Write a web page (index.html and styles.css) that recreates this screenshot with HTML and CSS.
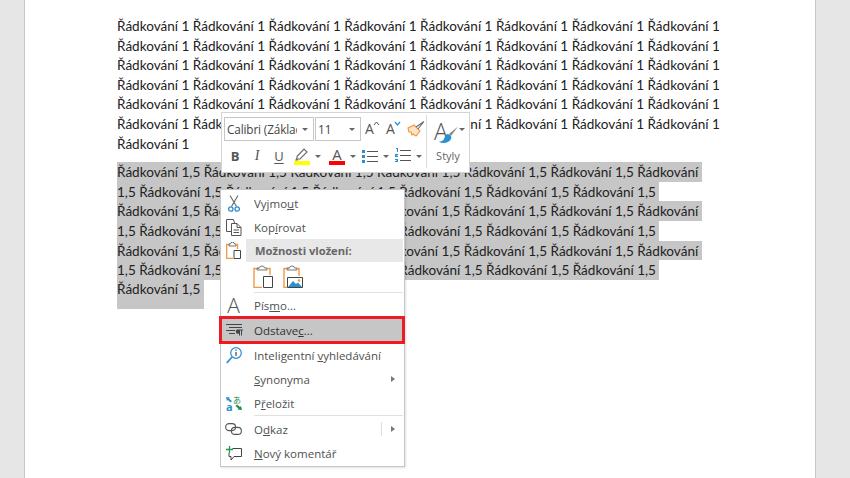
FILE: index.html
```html
<!DOCTYPE html>
<html lang="cs">
<head>
<meta charset="utf-8">
<title>Řádkování</title>
<link rel="stylesheet" href="styles.css">
</head>
<body>
<main class="page">
  <div class="para">
    <div class="line">Řádkování 1 Řádkování 1 Řádkování 1 Řádkování 1 Řádkování 1 Řádkování 1 Řádkování 1 Řádkování 1</div>
    <div class="line">Řádkování 1 Řádkování 1 Řádkování 1 Řádkování 1 Řádkování 1 Řádkování 1 Řádkování 1 Řádkování 1</div>
    <div class="line">Řádkování 1 Řádkování 1 Řádkování 1 Řádkování 1 Řádkování 1 Řádkování 1 Řádkování 1 Řádkování 1</div>
    <div class="line">Řádkování 1 Řádkování 1 Řádkování 1 Řádkování 1 Řádkování 1 Řádkování 1 Řádkování 1 Řádkování 1</div>
    <div class="line">Řádkování 1 Řádkování 1 Řádkování 1 Řádkování 1 Řádkování 1 Řádkování 1 Řádkování 1 Řádkování 1</div>
    <div class="line">Řádkování 1 Řádkování 1 Řádkování 1 Řádkování 1 Řádkování 1 Řádkování 1 Řádkování 1 Řádkování 1</div>
    <div class="line">Řádkování 1</div>
  </div>
  <div class="para selected">
    <div class="line">Řádkování 1,5 Řádkování 1,5 Řádkování 1,5 Řádkování 1,5 Řádkování 1,5 Řádkování 1,5 Řádkování </div>
    <div class="line">1,5 Řádkování 1,5 Řádkování 1,5 Řádkování 1,5 Řádkování 1,5 Řádkování 1,5 Řádkování 1,5 </div>
    <div class="line">Řádkování 1,5 Řádkování 1,5 Řádkování 1,5 Řádkování 1,5 Řádkování 1,5 Řádkování 1,5 Řádkování </div>
    <div class="line">1,5 Řádkování 1,5 Řádkování 1,5 Řádkování 1,5 Řádkování 1,5 Řádkování 1,5 Řádkování 1,5 </div>
    <div class="line">Řádkování 1,5 Řádkování 1,5 Řádkování 1,5 Řádkování 1,5 Řádkování 1,5 Řádkování 1,5 Řádkování </div>
    <div class="line">1,5 Řádkování 1,5 Řádkování 1,5 Řádkování 1,5 Řádkování 1,5 Řádkování 1,5 Řádkování 1,5 </div>
    <div class="line last">Řádkování 1,5 </div>
  </div>
</main>

<div class="toolbar">
  <div class="tb-main">
    <div class="tb-row">
      <div class="combo font"><span class="combo-text">Calibri (Základní)</span><i class="caret"></i></div>
      <div class="combo size"><span class="combo-text">11</span><i class="caret"></i></div>
      <span class="grow first">A<svg class="sup" width="7" height="5" viewBox="0 0 7 5"><path d="M1 4l2.500-3L6 4" fill="none" stroke="#555" stroke-width="1"/></svg></span>
      <span class="grow">A<svg class="sup" width="7" height="5" viewBox="0 0 7 5"><path d="M1 1l2.500 3L6 1" fill="none" stroke="#2b8fd0" stroke-width="1.200"/></svg></span>
      <svg class="brush" width="18" height="16" viewBox="0 0 18 16"><path d="M1 7l6-3 6 6-4 5-3-2-1 1-1-3-2 0z" fill="#fce3c6" stroke="#ee9a45" stroke-width="1.200"/><path d="M9 6l8-5.500M11 8l6-7.500" fill="none" stroke="#6e6e6e" stroke-width="1.200"/></svg>
    </div>
    <div class="tb-row second">
      <span class="fmt bold">B</span>
      <span class="fmt ital">I</span>
      <span class="fmt under">U</span>
      <span class="color-btn">
        <svg width="16" height="13" viewBox="0 0 16 13"><path d="M3 8.500l7-7.500 3 3-7 7H3z" fill="none" stroke="#6a6a6a" stroke-width="1.100"/><path d="M1 12.500h3.500L2.500 10z" fill="#6a6a6a"/></svg>
        <i class="swatch yellow"></i>
      </span>
      <i class="caret gap"></i>
      <span class="color-btn">
        <span class="color-a">A</span>
        <i class="swatch red"></i>
      </span>
      <i class="caret gap"></i>
      <svg class="list" width="16" height="15" viewBox="0 0 16 15"><path d="M0 1h3v3H0zM0 6h3v3H0zM0 11h3v3H0z" fill="#2b8fd0"/><path d="M5 2.500h11M5 7.500h11M5 12.500h11" stroke="#555" stroke-width="1"/></svg>
      <i class="caret gap"></i>
      <svg class="list" width="16" height="16" viewBox="0 0 16 16"><path d="M1 0h2v4H2V1H1zM0 6h3v1l-2 1h2v1H0zM0 11h3v3H0v-1h2v-.500H1v-.500h1V12H0z" fill="#2b8fd0"/><path d="M5 2.500h11M5 7.500h11M5 12.500h11" stroke="#555" stroke-width="1"/></svg>
      <i class="caret gap"></i>
    </div>
  </div>
  <div class="tb-style">
    <div class="style-icon">
      <span class="style-a">A</span>
      <svg class="style-brush" width="20" height="18" viewBox="0 0 20 18"><path d="M19 .5L10 8l2 2z" fill="#8a8a8a"/><path d="M9 8c-3 0-3 3-4 5-1 2-3 2-5 3 4 2 10 1 12-3 1-2 0-4-3-5z" fill="#2b8fd0"/></svg>
      <i class="caret"></i>
    </div>
    <span class="style-label">Styly</span>
  </div>
</div>

<nav class="menu">
  <div class="item">
    <span class="ico"><svg width="12" height="17" viewBox="0 0 12 17"><path d="M2 .5l6.500 11M10 .5L3.500 11.500" fill="none" stroke="#666" stroke-width="1.100"/><circle cx="2.800" cy="14" r="2.200" fill="none" stroke="#2b8fd0" stroke-width="1.300"/><circle cx="9.200" cy="14" r="2.200" fill="none" stroke="#2b8fd0" stroke-width="1.300"/></svg></span>
    <span class="label">Vyjmo<u>u</u>t</span>
  </div>
  <div class="item">
    <span class="ico"><svg width="16" height="17" viewBox="0 0 16 17"><path d="M5 12.500H.5V.5h7l1 3.500M5.500 4.500h5.500l4 4v8H5.500zM11 4.500v4h4M7.500 11h5.500M7.500 13.500h5.500" fill="none" stroke="#555" stroke-width="1"/></svg></span>
    <span class="label">Kop<u>í</u>rovat</span>
  </div>
  <div class="item heading-row">
    <span class="ico"><svg width="15" height="17" viewBox="0 0 15 17"><path d="M4 2.500H.7v14H7" fill="none" stroke="#ee9a45" stroke-width="1.300"/><path d="M3 4V2h1.500a2 1.800 0 0 1 4 0H10v2z" fill="none" stroke="#777" stroke-width="1"/><path d="M10 2.500h1.500V7" fill="none" stroke="#ee9a45" stroke-width="1.300"/><path d="M8 8.500h6.500v8H8z" fill="#fff" stroke="#444" stroke-width="1"/></svg></span>
    <span class="heading">Možnosti vložení:</span>
  </div>
  <div class="paste-row">
    <svg width="20" height="23" viewBox="0 0 20 23"><path d="M6 3.500H1v19h8" fill="none" stroke="#ee9a45" stroke-width="1.400"/><path d="M4 5V3h2.500a2.500 2 0 0 1 5 0H14v2z" fill="none" stroke="#777" stroke-width="1"/><path d="M14 3.500h3V10" fill="none" stroke="#ee9a45" stroke-width="1.400"/><path d="M10.500 11.500h9v11h-9z" fill="#fff" stroke="#444" stroke-width="1"/></svg>
    <svg width="20" height="23" viewBox="0 0 20 23"><path d="M6 3.500H1v19h3" fill="none" stroke="#ee9a45" stroke-width="1.400"/><path d="M4 5V3h2.500a2.500 2 0 0 1 5 0H14v2z" fill="none" stroke="#777" stroke-width="1"/><path d="M14 3.500h2V11" fill="none" stroke="#ee9a45" stroke-width="1.400"/><path d="M4.500 12.500h15v10h-15z" fill="#fff" stroke="#444" stroke-width="1"/><path d="M5 22l5-6 3 3 2-1.500 4 4.500z" fill="#2b8fd0"/><circle cx="16" cy="15.500" r="1.300" fill="#ee9a45"/></svg>
  </div>
  <div class="sep indented"></div>
  <div class="item">
    <span class="ico"><span class="big-a">A</span></span>
    <span class="label">Pís<u>m</u>o...</span>
  </div>
  <div class="item active">
    <span class="ico"><svg width="17" height="12" viewBox="0 0 17 12"><path d="M0 .5h16M3 3.500h13M0 6.500h9M3 9.500h6" stroke="#444" stroke-width="1"/><path d="M11 5.500h6v1h-1v5h-1v-5h-1v5h-1V9.500a2 2 0 0 1-2-4z" fill="#444"/></svg></span>
    <span class="label">Odstave<u>c</u>...</span>
  </div>
  <div class="item">
    <span class="ico"><svg width="16" height="17" viewBox="0 0 16 17"><circle cx="10" cy="6" r="5.300" fill="none" stroke="#2b8fd0" stroke-width="1.200"/><path d="M6 10L.8 16" stroke="#2b8fd0" stroke-width="1.700"/><path d="M9.400 2.500h1.300v1.300H9.400zM9.400 5h1.300v4H9.400z" fill="#555"/></svg></span>
    <span class="label">Inteligentní <u>v</u>yhledávání</span>
  </div>
  <div class="item">
    <span class="ico"></span>
    <span class="label"><u>S</u>ynonyma</span>
    <i class="arrow"></i>
  </div>
  <div class="item">
    <span class="ico"><svg width="16" height="16" viewBox="0 0 16 16"><path d="M0 2l4 .500-1 1 3 2.500-1.500 1.500L2 5 1 6z" fill="#2b8fd0"/><path d="M16 15l-4.500-.500 1-1-3-2.500L11 9.500 14 12l1-1z" fill="#1f8a4c"/></svg><span class="tr-a">a</span><span class="tr-b">あ</span></span>
    <span class="label">P<u>ř</u>eložit</span>
  </div>
  <div class="sep"></div>
  <div class="item">
    <span class="ico"><svg width="17" height="12" viewBox="0 0 17 12"><rect x=".6" y=".6" width="10" height="7" rx="3.500" fill="none" stroke="#555" stroke-width="1.100"/><rect x="6.400" y="4.400" width="10" height="7" rx="3.500" fill="none" stroke="#555" stroke-width="1.100"/></svg></span>
    <span class="label">O<u>d</u>kaz</span>
    <i class="divider"></i>
    <i class="arrow"></i>
  </div>
  <div class="item">
    <span class="ico"><svg width="16" height="15" viewBox="0 0 16 15"><path d="M6.500 2.500h9v8H8L5 14v-3.500H3V7" fill="none" stroke="#444" stroke-width="1"/><path d="M3.500 0v7M0 3.500h7" stroke="#1f9a50" stroke-width="1.300"/></svg></span>
    <span class="label"><u>N</u>ový komentář</span>
  </div>
</nav>
</body>
</html>
```
FILE: styles.css
```css
* { box-sizing: border-box; }

html, body { margin: 0; height: 100%; }

body {
  background: #e6e6e6;
  overflow: hidden;
  font-family: "Lato", "Liberation Sans", sans-serif;
  color: #222;
}

.page {
  width: 792px;
  height: 478px;
  margin-left: 24px;
  padding: 17px 0 0 92px;
  background: #fff;
  border-left: 1px solid #c6c6c6;
  border-right: 1px solid #c6c6c6;
}

.para { font-size: 13.540px; line-height: 19.600px; margin-bottom: 8px; }
.line { white-space: pre; width: fit-content; }
.selected .line { background: #c6c6c6; height: 19.600px; padding-top: 1px; }
.selected .line.last { height: 29px; padding-top: 0; }

/* mini toolbar */
.toolbar {
  position: absolute;
  left: 221px;
  top: 112px;
  width: 249px;
  height: 61px;
  display: flex;
  background: #fff;
  border: 1px solid #d4d4d4;
  color: #555;
  font-family: "Open Sans", "Liberation Sans", sans-serif;
}

.tb-main { width: 204px; padding: 4px 0 0 2px; }
.tb-row { display: flex; align-items: center; height: 24px; }
.tb-row.second { margin-top: 3px; }

.combo {
  display: flex;
  align-items: center;
  height: 24px;
  border: 1px solid #c6c6c6;
  font-size: 11.800px;
  padding-left: 2px;
  color: #444;
}
.combo.font { width: 90px; }
.combo.size { width: 46px; margin-left: 1px; }
.combo-text { flex: 1; overflow: hidden; white-space: nowrap; }
.font .combo-text { max-width: 73px; letter-spacing: -.15px; }

.caret {
  display: inline-block;
  flex: none;
  width: 0;
  height: 0;
  margin: 0 5px;
  border-left: 3.500px solid transparent;
  border-right: 3.500px solid transparent;
  border-top: 3.500px solid #666;
}
.caret.gap { margin: 0 4px 0 5px; }

.grow {
  display: flex;
  width: 21px;
  font-size: 14px;
  color: #555;
  line-height: 20px;
}
.grow.first { margin-left: 4px; }
.sup { margin-top: 2px; margin-left: -1px; }

.fmt { width: 22px; text-align: center; font-size: 13px; color: #555; flex: none; }
.bold { font-weight: 700; }
.ital { font-style: italic; font-family: "Liberation Serif", serif; font-size: 14px; }
.under { text-decoration: underline; text-underline-offset: 2px; }

.color-btn {
  display: flex;
  flex-direction: column;
  align-items: center;
  width: 16px;
  margin-left: 4px;
  height: 18px;
  justify-content: flex-end;
}
.color-a { font-size: 15px; line-height: 14px; color: #555; }
.swatch { display: block; width: 16px; height: 4px; flex: none; }
.yellow { background: #ffff00; }
.red { background: #ff0000; }
.list { margin-left: 2px; flex: none; }

.tb-style {
  flex: 1;
  margin: 2px 0 4px;
  border-left: 1px solid #dcdcdc;
  display: flex;
  flex-direction: column;
  align-items: center;
}
.style-icon { position: relative; height: 33px; width: 40px; }
.style-a { position: absolute; left: 6px; top: 1px; font-size: 23px; line-height: 30px; color: #555; font-weight: 300; }
.style-brush { position: absolute; left: 11px; top: 11px; }
.style-icon .caret { position: absolute; left: 31px; top: 13px; margin: 0; }
.style-label { font-size: 11px; color: #666; line-height: 16px; margin-top: 0; }

/* context menu */
.menu {
  position: absolute;
  left: 220px;
  top: 189px;
  width: 185px;
  height: 278px;
  padding-top: 1px;
  background: #fff;
  border: 1px solid #c6c6c6;
  box-shadow: 1px 1px 2px rgba(0, 0, 0, .12);
  font-family: "Open Sans", "Liberation Sans", sans-serif;
  font-size: 11.500px;
  color: #505050;
}

.item { display: flex; align-items: center; height: 24px; position: relative; }
.ico { width: 25px; display: flex; justify-content: center; align-items: center; flex: none; position: relative; }
.label { flex: 1; white-space: nowrap; padding-left: 8px; }
.label u { text-underline-offset: 1px; }

.heading-row { height: 23px; margin-right: 1px; }
.heading {
  flex: 1;
  align-self: stretch;
  display: flex;
  align-items: center;
  padding-left: 9px;
  background: #e8e8e8;
  font-size: 11.200px;
  font-weight: 700;
  color: #666;
}

.paste-row { display: flex; gap: 10px; padding: 3px 0 0 32px; height: 29px; }

.sep { height: 1px; background: #e0e0e0; margin: 0 1px 1px 33px; }
.sep.indented { margin: 1px 1px 0 33px; }

.big-a { font-size: 21px; line-height: 21px; color: #555; font-weight: 300; }

.item.active {
  height: 22px;
  background: #c6c6c6;
  color: #333;
  outline: 3px solid #ed1c24;
  margin: 2px 2px 2px 1px;
  z-index: 1;
}
.item.active .ico { width: 24px; }

.arrow {
  flex: none;
  width: 0;
  height: 0;
  margin-right: 9px;
  border-top: 3.500px solid transparent;
  border-bottom: 3.500px solid transparent;
  border-left: 4px solid #777;
}
.divider { flex: none; width: 1px; height: 14px; background: #ddd; margin-right: 9px; }

.tr-a {
  position: absolute;
  left: 5px;
  top: 6px;
  font-size: 11px;
  line-height: 12px;
  font-weight: 700;
  color: #2b8fd0;
}
.tr-b {
  position: absolute;
  left: 12px;
  top: 0;
  font-size: 8px;
  line-height: 10px;
  color: #1f8a4c;
  font-family: "Noto Sans CJK JP", sans-serif;
}
```
